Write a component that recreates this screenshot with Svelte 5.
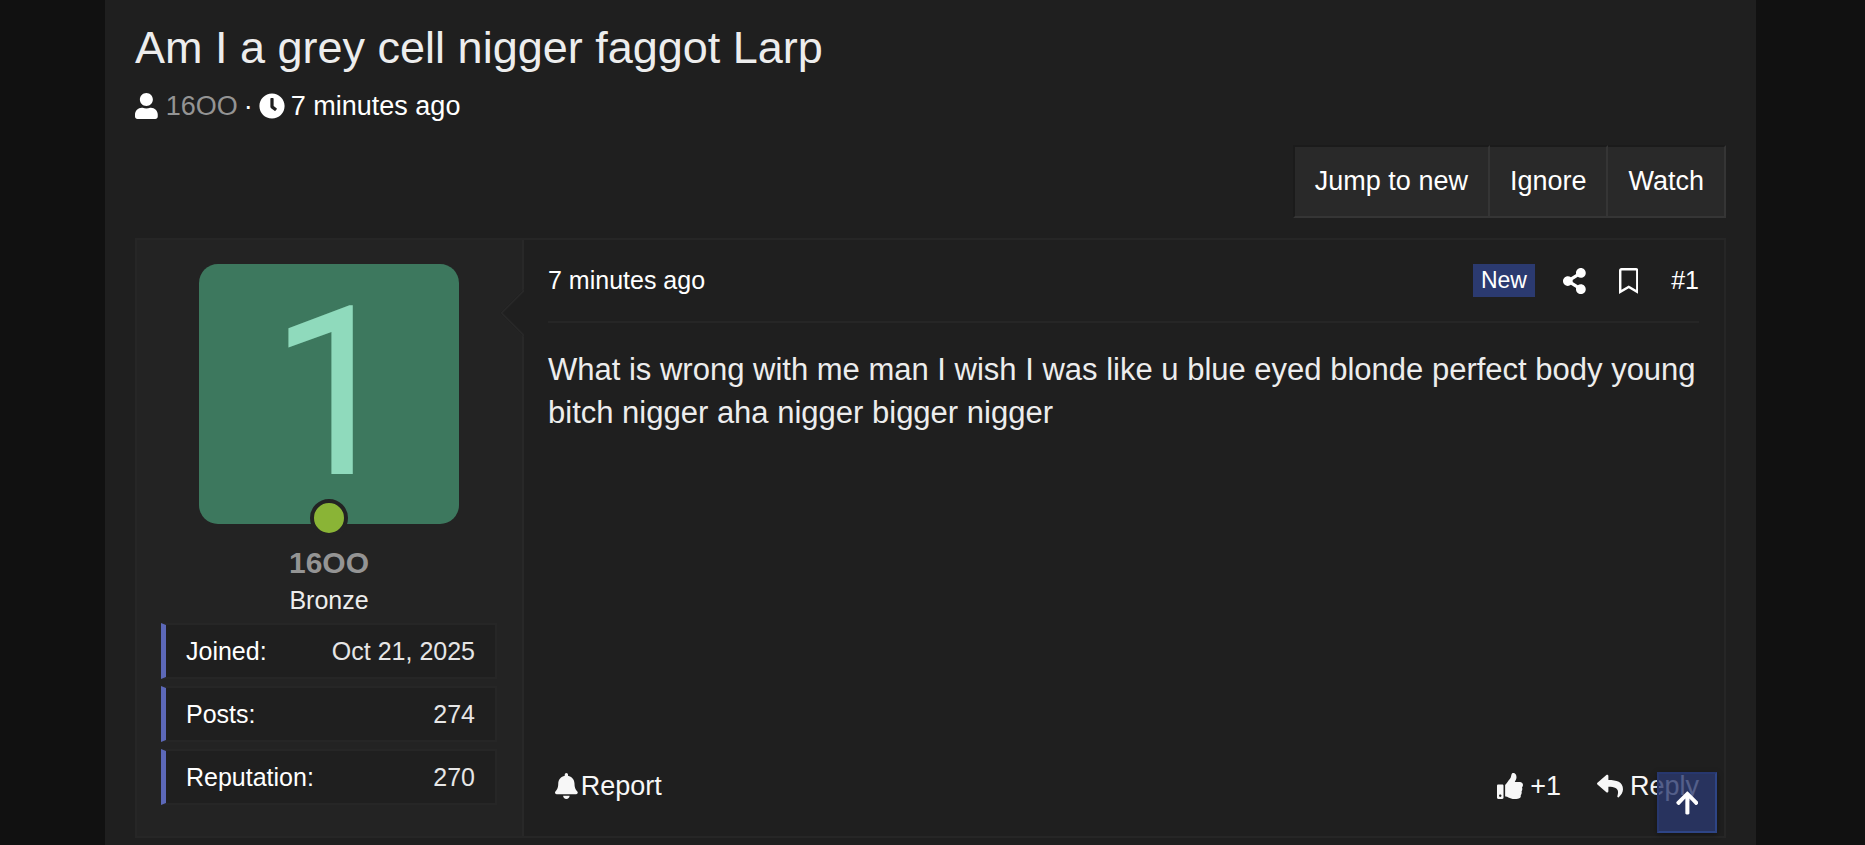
<script lang="ts">
  interface Icon {
    width: number;
    path: string;
  }

  interface Stat {
    label: string;
    value: string;
  }

  const icons: Record<string, Icon> = {
    user: {
      width: 448,
      path: 'M224 256c70.7 0 128-57.3 128-128S294.7 0 224 0 96 57.3 96 128s57.3 128 128 128zm89.6 32h-16.7c-22.2 10.2-46.9 16-72.9 16s-50.6-5.8-72.9-16h-16.7C60.2 288 0 348.2 0 422.4V464c0 26.5 21.5 48 48 48h352c26.5 0 48-21.5 48-48v-41.6c0-74.2-60.2-134.4-134.4-134.4z'
    },
    clock: {
      width: 512,
      path: 'M256,8C119,8,8,119,8,256S119,504,256,504,504,393,504,256,393,8,256,8Zm92.49,313h0l-20,25a16,16,0,0,1-22.49,2.5h0l-67-49.72a40,40,0,0,1-15-31.23V112a16,16,0,0,1,16-16h32a16,16,0,0,1,16,16V256l58,42.5A16,16,0,0,1,348.49,321Z'
    },
    share: {
      width: 448,
      path: 'M352 320c-22.608 0-43.387 7.819-59.79 20.895l-102.486-64.054a96.551 96.551 0 0 0 0-41.683l102.486-64.054C308.613 184.181 329.392 192 352 192c53.019 0 96-42.981 96-96S405.019 0 352 0s-96 42.981-96 96c0 7.158.79 14.13 2.276 20.841L155.79 180.895C139.387 167.819 118.608 160 96 160c-53.019 0-96 42.981-96 96s42.981 96 96 96c22.608 0 43.387-7.819 59.79-20.895l102.486 64.054A96.301 96.301 0 0 0 256 416c0 53.019 42.981 96 96 96s96-42.981 96-96-42.981-96-96-96z'
    },
    bookmark: {
      width: 384,
      path: 'M336 0H48C21.49 0 0 21.49 0 48v464l192-112 192 112V48c0-26.51-21.49-48-48-48zm0 428.43l-144-84-144 84V54a6 6 0 0 1 6-6h276c3.314 0 6 2.683 6 5.996V428.43z'
    },
    bell: {
      width: 448,
      path: 'M224 512c35.32 0 63.97-28.65 63.97-64H160.03c0 35.35 28.65 64 63.97 64zm215.39-149.71c-19.32-20.76-55.47-51.99-55.47-154.29 0-77.7-54.48-139.9-127.94-155.16V32c0-17.67-14.32-32-31.98-32s-31.98 14.33-31.98 32v20.84C118.56 68.1 64.08 130.3 64.08 208c0 102.3-36.15 133.53-55.47 154.29-6 6.45-8.66 14.16-8.61 21.71.11 16.4 12.98 32 32.1 32h383.8c19.12 0 32-15.6 32.1-32 .05-7.55-2.61-15.27-8.61-21.71z'
    },
    thumb: {
      width: 512,
      path: 'M104 224H24c-13.255 0-24 10.745-24 24v240c0 13.255 10.745 24 24 24h80c13.255 0 24-10.745 24-24V248c0-13.255-10.745-24-24-24zM64 472c-13.255 0-24-10.745-24-24s10.745-24 24-24 24 10.745 24 24-10.745 24-24 24zM384 81.452c0 42.416-25.97 66.208-33.277 94.548h101.723c33.397 0 59.397 27.746 59.553 58.098.084 17.938-7.546 37.249-19.439 49.197l-.11.11c9.836 23.337 8.237 56.037-9.308 79.469 8.681 25.895-.069 57.704-16.382 74.757 4.298 17.598 2.244 32.575-6.148 44.632C440.202 511.587 389.616 512 346.839 512l-2.845-.001c-48.287-.017-87.806-17.598-119.56-31.725-15.957-7.099-36.821-15.887-52.651-16.178-6.54-.12-11.783-5.457-11.783-11.998v-213.77c0-3.2 1.282-6.271 3.558-8.521 39.614-39.144 56.648-80.587 89.117-113.111 14.804-14.832 20.188-37.236 25.393-58.902C282.515 39.293 291.817 0 312 0c24 0 72 8 72 81.452z'
    },
    reply: {
      width: 512,
      path: 'M8.309 189.836L184.313 37.851C199.719 24.546 224 35.347 224 56.015v80.053c160.629 1.839 288 34.032 288 186.258 0 61.441-39.581 122.309-83.333 154.132-13.653 9.931-33.111-2.533-28.077-18.631 45.344-145.012-21.507-183.51-176.59-185.742V360c0 20.7-24.3 31.453-39.687 18.164l-176.004-152c-11.071-9.562-11.086-26.753 0-36.328z'
    },
    up: {
      width: 448,
      path: 'M34.9 289.5l-22.2-22.2c-9.4-9.4-9.4-24.6 0-33.9L207 39c9.4-9.4 24.6-9.4 33.9 0l194.3 194.3c9.4 9.4 9.4 24.6 0 33.9L413 289.4c-9.5 9.5-25 9.3-34.3-.4L264 168.6V456c0 13.3-10.7 24-24 24h-32c-13.3 0-24-10.7-24-24V168.6L69.2 289.1c-9.3 9.8-24.8 10-34.3.4z'
    }
  };

  const title = 'Am I a grey cell nigger faggot Larp';
  const author = '16OO';
  const posted = '7 minutes ago';
  const message =
    'What is wrong with me man I wish I was like u blue eyed blonde perfect body young bitch nigger aha nigger bigger nigger';

  const threadActions: string[] = ['Jump to new', 'Ignore', 'Watch'];

  const stats: Stat[] = [
    { label: 'Joined:', value: 'Oct 21, 2025' },
    { label: 'Posts:', value: '274' },
    { label: 'Reputation:', value: '270' }
  ];
</script>

{#snippet icon(name: string)}
  <svg class="icon" viewBox={`0 0 ${icons[name].width} 512`} aria-hidden="true">
    <path d={icons[name].path} />
  </svg>
{/snippet}

<main class="page">
  <header class="thread-header">
    <h1>{title}</h1>
    <div class="meta">
      {@render icon('user')}
      <a class="author" href="#author">{author}</a>
      <span>·</span>
      {@render icon('clock')}
      <a href="#post-1"><time>{posted}</time></a>
    </div>
  </header>

  <nav class="thread-actions" aria-label="Thread">
    {#each threadActions as action}
      <button type="button">{action}</button>
    {/each}
  </nav>

  <article class="post" id="post-1">
    <aside class="user">
      <a class="avatar" href="#author" aria-label={author}>
        <span class="initial">1</span>
        <span class="online"></span>
      </a>
      <a class="name" href="#author">{author}</a>
      <div class="rank">Bronze</div>
      <dl class="stats">
        {#each stats as stat}
          <div class="stat">
            <dt>{stat.label}</dt>
            <dd>{stat.value}</dd>
          </div>
        {/each}
      </dl>
    </aside>

    <section class="content">
      <header class="post-header">
        <a class="date" href="#post-1"><time>{posted}</time></a>
        <span class="badge">New</span>
        <a class="tool" href="#share" aria-label="Share">{@render icon('share')}</a>
        <a class="tool" href="#bookmark" aria-label="Bookmark">{@render icon('bookmark')}</a>
        <a class="tool" href="#post-1">#1</a>
      </header>

      <p class="message">{message}</p>

      <footer class="post-footer">
        <a class="report" href="#report">{@render icon('bell')}Report</a>
        <a class="like" href="#like">{@render icon('thumb')}+1</a>
        <a class="reply" href="#reply">{@render icon('reply')}Reply</a>
      </footer>
    </section>
  </article>

  <button class="to-top" type="button" aria-label="Top">{@render icon('up')}</button>
</main>

<style>
  :global(body) {
    background: #111;
  }

  .page {
    box-sizing: border-box;
    min-height: 100vh;
    margin: 0 109px 0 105px;
    padding: 21px 30px 0;
    background: #1f1f1f;
    color: #fff;
    font: 27px/38px 'Liberation Sans', Arial, sans-serif;
  }

  a {
    color: inherit;
    text-decoration: none;
  }

  button {
    color: inherit;
    font: inherit;
    cursor: pointer;
  }

  .icon {
    display: block;
    height: 26px;
    fill: currentColor;
  }

  h1 {
    margin: 0 0 12px;
    color: #ededed;
    font-size: 45px;
    font-weight: 400;
    line-height: 54px;
  }

  .meta {
    display: flex;
    align-items: center;
    gap: 6px;
  }

  .author {
    margin-left: 2px;
  }

  .author,
  .name {
    color: #949494;
  }

  .thread-actions {
    display: flex;
    justify-content: flex-end;
    margin: 20px 0;
  }

  .thread-actions button {
    padding: 15px 20px 16px;
    border: 2px solid;
    border-color: #1b1b1b #353535 #353535 #1b1b1b;
    border-left-width: 0;
    background: #292929;
  }

  .thread-actions button:first-child {
    border-left-width: 2px;
  }

  .post {
    display: flex;
    border: 2px solid #262626;
  }

  .user {
    position: relative;
    box-sizing: border-box;
    flex: 0 0 387px;
    padding: 24px 25px 31px 24px;
    border-right: 2px solid #282828;
    background: #232323;
    text-align: center;
  }

  /* speech arrow pointing from the message to its author */
  .user::after {
    content: '';
    position: absolute;
    top: 56px;
    right: -19px;
    width: 32px;
    height: 32px;
    border: 2px solid #282828;
    border-width: 0 0 2px 2px;
    background: #1f1f1f;
    clip-path: polygon(0 0, 100% 100%, 0 100%);
    transform: rotate(45deg);
  }

  .avatar {
    position: relative;
    display: flex;
    align-items: center;
    justify-content: center;
    width: 260px;
    height: 260px;
    margin: 0 auto 20px;
    border-radius: 19px;
    background: #3d785e;
    color: #8fdabc;
    font: 236px/260px Roboto, sans-serif;
  }

  .initial {
    padding-left: 12px;
  }

  .online {
    position: absolute;
    bottom: -13px;
    left: 111px;
    width: 30px;
    height: 30px;
    border: 4px solid #232323;
    border-radius: 50%;
    background: #8ab436;
  }

  .name {
    display: block;
    font-size: 30px;
    font-weight: 700;
  }

  .rank {
    color: #ededed;
    font-size: 25px;
    line-height: 36px;
  }

  .stats {
    display: grid;
    gap: 7px;
    margin: 5px 0 0;
    font-size: 25px;
  }

  .stat {
    display: flex;
    justify-content: space-between;
    padding: 7px 20px;
    border: 2px solid #262626;
    border-left: 5px solid #5c68b8;
    background: #1f1f1f;
  }

  dd {
    margin: 0;
    color: #e6e6e6;
  }

  .content {
    display: flex;
    flex: 1;
    flex-direction: column;
    min-width: 0;
    padding: 24px 25px 31px 24px;
  }

  .post-header {
    display: flex;
    align-items: center;
    padding-bottom: 24px;
    border-bottom: 2px solid #262626;
    font-size: 25px;
    line-height: 33px;
  }

  .date {
    margin-right: auto;
  }

  .badge {
    padding: 0 8px;
    background: #2b3a70;
    font-size: 23px;
  }

  .tool {
    margin-left: 28px;
  }

  .tool + .tool {
    margin-left: 33px;
  }

  .message {
    margin: 25px 0;
    color: #ededed;
    font-size: 31px;
    line-height: 43px;
  }

  .post-footer {
    display: flex;
    align-items: center;
    margin-top: auto;
    color: #f7f7f7;
  }

  .post-footer a {
    display: flex;
    align-items: center;
  }

  .report {
    gap: 3px;
    margin-right: auto;
    padding-left: 7px;
  }

  .like {
    gap: 7px;
  }

  .reply {
    gap: 7px;
    margin-left: 36px;
  }

  .to-top {
    position: fixed;
    right: 148px;
    bottom: 12px;
    display: flex;
    align-items: center;
    justify-content: center;
    width: 60px;
    height: 61px;
    padding: 0;
    border: 2px solid;
    border-color: #27376e #2e4586 #2e4586 #27376e;
    background: rgba(42, 56, 110, 0.8);
    box-shadow: 0 2px 6px rgba(0, 0, 0, 0.35);
  }
</style>
